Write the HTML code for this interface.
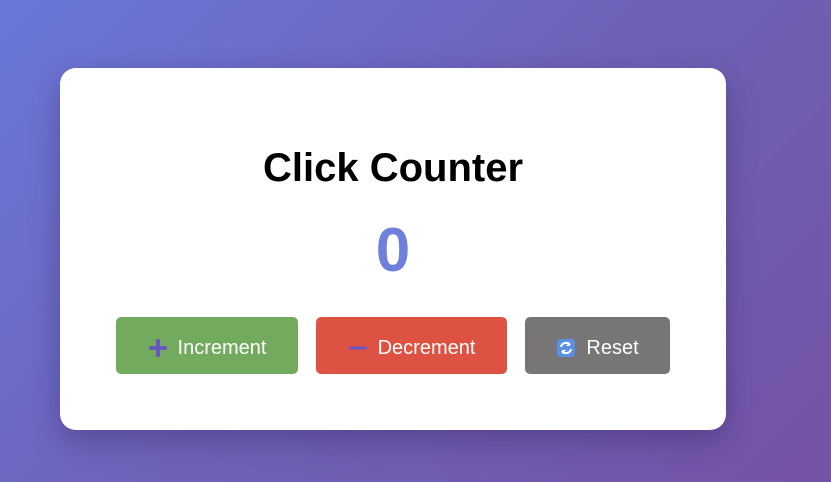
<!DOCTYPE html>
<html><head><style>
html,body{margin:0;padding:0}
body{width:831px;height:482px;overflow:hidden;background:linear-gradient(135deg,#6a78d8 0%,#6e62b8 50%,#7452a6 100%);font-family:"Liberation Sans",sans-serif;position:relative}
.card{position:absolute;left:60px;top:68px;width:666px;height:362px;background:#fff;border-radius:16px;box-shadow:0 10px 30px rgba(40,20,80,.35)}
.h{position:absolute;left:0;width:666px;top:75px;margin:0;text-align:center;font-size:40px;font-weight:bold;line-height:50px}
.num{position:absolute;left:0;width:666px;top:150px;text-align:center;font-size:62px;font-weight:bold;color:#6f7fdc;line-height:66px}
.btn{position:absolute;top:249px;height:57px;box-sizing:border-box;padding-top:5px;border-radius:5px;color:#fff;font-size:20px;display:flex;align-items:center;justify-content:center;gap:10px}
</style></head><body>
<div class="card">
<div class="h">Click Counter</div>
<div class="num">0</div>
<div class="btn" style="left:56px;width:182px;background:#72ab5d"><svg width="20" height="20" viewBox="0 0 20 20"><rect x="8" y="1" width="4" height="18" rx="1.5" fill="#6a56c0"/><rect x="1" y="8" width="18" height="4" rx="1.5" fill="#6a56c0"/></svg>Increment</div>
<div class="btn" style="left:256px;width:191px;background:#de5243"><svg width="20" height="20" viewBox="0 0 20 20"><rect x="1" y="8.5" width="18" height="3" rx="1" fill="#6a56c0"/></svg>Decrement</div>
<div class="btn" style="left:465px;width:145px;background:#777576"><svg width="20" height="20" viewBox="0 0 20 20"><rect x="1" y="1" width="18" height="18" rx="3" fill="#5b8fe6"/><path d="M5 9a5 5 0 0 1 9-2M15 11a5 5 0 0 1-9 2" stroke="#fff" stroke-width="2" fill="none"/><path d="M14 4v4h-4z M6 16v-4h4z" fill="#fff"/></svg>Reset</div>
</div>
</body></html>
